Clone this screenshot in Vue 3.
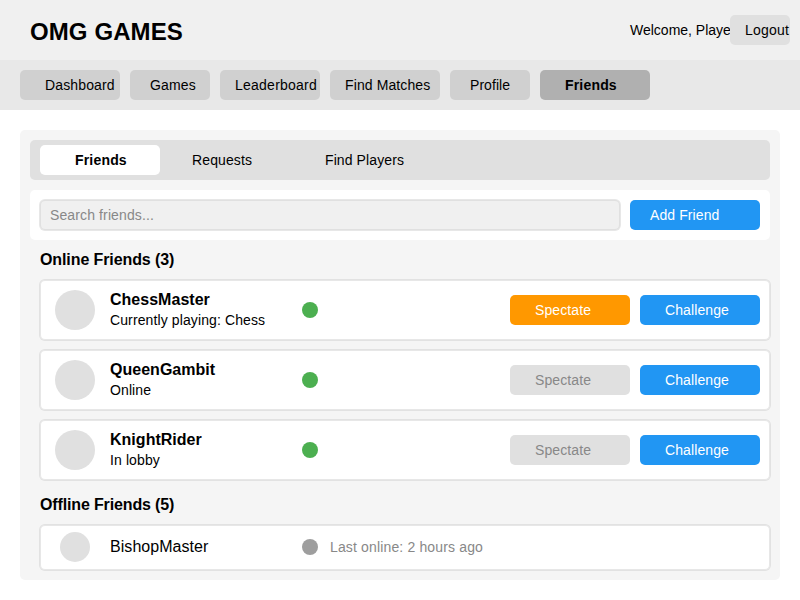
<script setup>
const navItems = [
  { label: 'Dashboard', width: 100, pad: 25, spacing: 0.14 },
  { label: 'Games', width: 80, pad: 20, spacing: 0.15 },
  { label: 'Leaderboard', width: 100, pad: 15, spacing: 0.24 },
  { label: 'Find Matches', width: 110, pad: 15, spacing: 0.11 },
  { label: 'Profile', width: 80, pad: 20, spacing: 0.05 },
  { label: 'Friends', width: 110, pad: 25, spacing: 0.18, active: true },
]

const tabs = [
  { label: 'Friends', pad: 35, spacing: 0.18, active: true },
  { label: 'Requests', pad: 32, spacing: 0.12 },
  { label: 'Find Players', pad: 45, spacing: 0.1 },
]

const onlineFriends = [
  { name: 'ChessMaster', status: 'Currently playing: Chess', playing: true },
  { name: 'QueenGambit', status: 'Online', playing: false },
  { name: 'KnightRider', status: 'In lobby', playing: false },
]
</script>

<template>
  <div class="page">
    <header class="header">
      <h1 class="brand">OMG GAMES</h1>
      <span class="welcome">Welcome, Player</span>
      <button class="btn logout">Logout</button>
    </header>

    <nav class="nav">
      <button
        v-for="item in navItems"
        :key="item.label"
        class="btn nav-item"
        :class="{ active: item.active }"
        :style="{ width: item.width + 'px', paddingLeft: item.pad + 'px', letterSpacing: item.spacing + 'px' }"
      >{{ item.label }}</button>
    </nav>

    <main class="panel">
      <div class="tabs">
        <button
          v-for="tab in tabs"
          :key="tab.label"
          class="btn tab"
          :class="{ active: tab.active }"
          :style="{ paddingLeft: tab.pad + 'px', letterSpacing: tab.spacing + 'px' }"
        >{{ tab.label }}</button>
      </div>

      <div class="search">
        <input class="search-input outlined" type="text" placeholder="Search friends..." />
        <button class="btn primary add">Add Friend</button>
      </div>

      <h2 class="section-title online-title">Online Friends (3)</h2>
      <div class="list">
        <article v-for="friend in onlineFriends" :key="friend.name" class="card outlined">
          <span class="avatar"></span>
          <div class="info">
            <div class="name">{{ friend.name }}</div>
            <div class="status">{{ friend.status }}</div>
          </div>
          <span class="dot online"></span>
          <div class="actions">
            <button class="btn action spectate" :class="{ enabled: friend.playing }">Spectate</button>
            <button class="btn action primary">Challenge</button>
          </div>
        </article>
      </div>

      <h2 class="section-title offline-title">Offline Friends (5)</h2>
      <article class="card compact outlined">
        <span class="avatar small"></span>
        <div class="info">
          <div class="offline-name">BishopMaster</div>
        </div>
        <span class="dot"></span>
        <span class="last-seen">Last online: 2 hours ago</span>
      </article>
    </main>
  </div>
</template>

<style>
body {
  background: #fff;
}
</style>

<style scoped>
.page {
  box-sizing: border-box;
  width: 800px;
  height: 600px;
  overflow: hidden;
  font-family: "Liberation Sans", Arial, sans-serif;
  font-size: 14px;
  line-height: 30px;
  color: #000;
}
.page * {
  box-sizing: border-box;
}
h1,
h2 {
  margin: 0;
}
.btn {
  display: block;
  flex: none;
  height: 30px;
  padding: 0;
  border: 0;
  border-radius: 5px;
  background: transparent;
  font: inherit;
  letter-spacing: 0.1px;
  color: inherit;
  text-align: left;
  white-space: nowrap;
}
.outlined {
  box-shadow: 0 0 0 1px rgba(208, 208, 208, 0.5), inset 0 0 0 1px rgba(208, 208, 208, 0.5);
}

.header {
  display: flex;
  align-items: center;
  height: 60px;
  padding: 0 10px 0 30px;
  background: #f0f0f0;
}
.brand {
  flex: 1;
  font-size: 24px;
  line-height: 30px;
  font-weight: bold;
  letter-spacing: 0.1px;
  padding-top: 3px;
}
.welcome {
  width: 100px;
  white-space: nowrap;
}
.logout {
  width: 60px;
  padding-left: 15px;
  background: #e0e0e0;
  letter-spacing: 0.2px;
}

.nav {
  display: flex;
  gap: 10px;
  height: 50px;
  padding: 10px 20px;
  background: #e8e8e8;
}
.nav-item {
  background: #d0d0d0;
}
.nav-item.active {
  background: #b0b0b0;
  font-weight: bold;
}

.panel {
  height: 450px;
  margin: 20px 20px 0;
  padding: 10px;
  border-radius: 5px;
  background: #f5f5f5;
}
.tabs {
  display: flex;
  height: 40px;
  padding: 5px 10px;
  border-radius: 5px;
  background: #e0e0e0;
}
.tab {
  width: 120px;
}
.tab.active {
  background: #fff;
  font-weight: bold;
}
.search {
  display: flex;
  gap: 10px;
  height: 50px;
  margin-top: 10px;
  padding: 10px;
  border-radius: 5px;
  background: #fff;
}
.search-input {
  flex: 1;
  min-width: 0;
  height: 30px;
  padding: 0 10px;
  border: 0;
  border-radius: 5px;
  outline: 0;
  background: #f0f0f0;
  font: inherit;
  letter-spacing: 0.12px;
}
.search-input::placeholder {
  color: #888;
  opacity: 1;
}
.primary {
  background: #2196f3;
  color: #fff;
}
.add {
  width: 130px;
  padding-left: 20px;
}

.section-title {
  padding-left: 10px;
  font-size: 16px;
  line-height: 20px;
  letter-spacing: -0.1px;
}
.online-title {
  height: 40px;
  padding-top: 10px;
}
.offline-title {
  height: 45px;
  padding-top: 15px;
  letter-spacing: -0.14px;
}
.list {
  display: grid;
  gap: 10px;
}
.card {
  display: flex;
  align-items: center;
  height: 60px;
  margin-left: 10px;
  padding: 0 10px 0 15px;
  border-radius: 5px;
  background: #fff;
}
.compact {
  height: 45px;
  padding-bottom: 1px;
  padding-left: 20px;
}
.avatar {
  flex: none;
  width: 40px;
  height: 40px;
  margin-right: 15px;
  border-radius: 50%;
  background: #e0e0e0;
}
.avatar.small {
  width: 30px;
  height: 30px;
  margin-right: 20px;
}
.info {
  width: 192px;
  white-space: nowrap;
}
.name {
  padding-top: 1px;
  font-size: 16px;
  line-height: 20px;
  font-weight: bold;
  letter-spacing: 0.02px;
}
.status {
  line-height: 21px;
  letter-spacing: 0.11px;
}
.offline-name {
  font-size: 16px;
  line-height: 20px;
  letter-spacing: 0.05px;
}
.dot {
  flex: none;
  width: 16px;
  height: 16px;
  border-radius: 50%;
  background: #9e9e9e;
}
.dot.online {
  background: #4caf50;
}
.actions {
  display: flex;
  gap: 10px;
  margin-left: auto;
}
.action {
  width: 120px;
  padding-left: 25px;
}
.spectate {
  background: #e0e0e0;
  color: #888;
}
.spectate.enabled {
  background: #ff9800;
  color: #fff;
}
.last-seen {
  margin-left: 12px;
  color: #888;
  letter-spacing: 0.15px;
}
</style>
